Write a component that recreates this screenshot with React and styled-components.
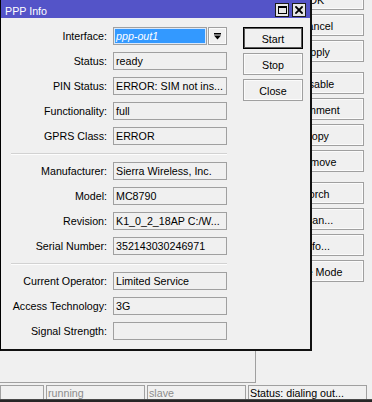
import React from 'react';
import styled, { createGlobalStyle } from 'styled-components';

const Global = createGlobalStyle`
  html, body { margin: 0; padding: 0; background: #f0f0f0; }
  body {
    font-family: "Liberation Sans", Arial, sans-serif;
    font-size: 10.7px;
    color: #000;
  }
  * { box-sizing: border-box; }
`;

const Desktop = styled.div`
  position: relative;
  width: 372px;
  height: 402px;
  overflow: hidden;
  background: #f0f0f0;
  display: flex;
  flex-direction: column;
`;

const MainArea = styled.div`
  flex: 1;
  display: flex;
  min-height: 0;
`;

const ListPanel = styled.div`
  width: 256px;
  border-right: 1px solid #a0a0a0;
  border-bottom: 1px solid #a0a0a0;
`;

const SideButtons = styled.div`
  width: 95px;
  margin-left: 13px;
  margin-top: -12px;
  display: flex;
  flex-direction: column;
  gap: 10px;
`;

const ButtonGroup = styled.div`
  display: flex;
  flex-direction: column;
  gap: 4px;
`;

const WinButton = styled.div`
  height: 22px;
  border: 1px solid ${p => (p.$default ? '#000' : '#a0a0a0')};
  box-shadow: inset 0 0 0 1px ${p => (p.$default ? '#5a5a5a' : '#fbfbfb')};
  background: #f0f0f0;
  display: flex;
  align-items: center;
  justify-content: center;
  white-space: nowrap;
  line-height: 14px;
  padding-top: 1px;
`;

const StatusBar = styled.div`
  height: 14px;
  margin-top: 2px;
  display: flex;
  gap: 2px;
`;

const StatusField = styled.div`
  width: ${p => p.$w}px;
  border: 1px solid #a0a0a0;
  border-bottom: none;
  padding: 1px 0 0 1px;
  line-height: 13px;
  color: ${p => (p.$dim ? '#8c8c8c' : '#000')};
  overflow: hidden;
  white-space: nowrap;
`;

const Taskbar = styled.div`
  height: 3px;
  background: #262626;
  border-top: 1px solid #4a4a4a;
`;

const Dialog = styled.div`
  position: absolute;
  left: 0;
  top: 0;
  width: 312px;
  height: 351px;
  z-index: 2;
  background: #f0f0f0;
  border-left: 1px solid #000;
  border-right: 2px solid #111;
  border-bottom: 2px solid #111;
  display: flex;
  flex-direction: column;
`;

const TitleBar = styled.div`
  height: 18px;
  flex: none;
  background: #5454c8;
  display: flex;
  align-items: flex-start;
  padding: 3px 4px 0 4px;
  gap: 3px;
`;

const TitleText = styled.div`
  flex: 1;
  color: #fff;
  line-height: 14px;
  padding-top: 1px;
  white-space: nowrap;
`;

const TitleButton = styled.div`
  width: 14px;
  height: 14px;
  border: 1px solid #1a1a1a;
  background: #e6e6e6;
  display: flex;
  align-items: center;
  justify-content: center;
`;

const Body = styled.div`
  flex: 1;
  display: flex;
  align-items: flex-start;
  padding: 9px 7px 9px 0;
`;

const FieldGrid = styled.div`
  display: grid;
  grid-template-columns: 106px 114px;
  column-gap: 6px;
  row-gap: 7px;
`;

const Label = styled.div`
  height: 18px;
  line-height: 19px;
  text-align: right;
  white-space: nowrap;
`;

const ValueBox = styled.div`
  height: 18px;
  border: 1px solid #a0a0a0;
  padding: 0 2px;
  line-height: 17px;
  overflow: hidden;
  white-space: nowrap;
`;

const ComboRow = styled.div`
  display: flex;
  gap: 1px;
  height: 18px;
`;

const ComboField = styled.div`
  width: 94px;
  border: 1px solid #a0a0a0;
  box-shadow: inset 0 0 0 1px #d9e8fb;
  background: #3399ff;
  color: #fff;
  font-style: italic;
  padding: 0 2px;
  line-height: 17px;
  white-space: nowrap;
  overflow: hidden;
`;

const DropButton = styled.div`
  flex: 1;
  border: 1px solid #a0a0a0;
  box-shadow: inset 0 0 0 1px #fbfbfb;
  background: #f0f0f0;
  display: flex;
  align-items: center;
  justify-content: center;
`;

const Separator = styled.div`
  grid-column: 1 / -1;
  margin: 1px 0 0 10px;
  height: 2px;
  border-top: 1px solid #d2d2d2;
  border-bottom: 1px solid #fdfdfd;
`;

const ActionColumn = styled.div`
  width: 60px;
  margin-left: 16px;
  display: flex;
  flex-direction: column;
  gap: 4px;
`;

const MaxIcon = () => (
  <svg width="9" height="8" viewBox="0 0 9 8">
    <rect x="0.5" y="0.5" width="8" height="7" fill="none" stroke="#000" strokeWidth="1" />
    <rect x="0" y="0" width="9" height="2" fill="#000" />
  </svg>
);

const CloseIcon = () => (
  <svg width="8" height="8" viewBox="0 0 8 8">
    <path d="M1 1 L7 7 M7 1 L1 7" stroke="#000" strokeWidth="1.8" strokeLinecap="square" />
  </svg>
);

const DropIcon = () => (
  <svg width="7" height="7" viewBox="0 0 7 7">
    <rect x="0" y="0" width="7" height="1.5" fill="#000" />
    <polygon points="0,2.5 7,2.5 3.5,6.5" fill="#000" />
  </svg>
);

const groupA = [
  { label: 'Status:', value: 'ready' },
  { label: 'PIN Status:', value: 'ERROR: SIM not ins...' },
  { label: 'Functionality:', value: 'full' },
  { label: 'GPRS Class:', value: 'ERROR' },
];

const groupB = [
  { label: 'Manufacturer:', value: 'Sierra Wireless, Inc.' },
  { label: 'Model:', value: 'MC8790' },
  { label: 'Revision:', value: 'K1_0_2_18AP C:/W...' },
  { label: 'Serial Number:', value: '352143030246971' },
];

const groupC = [
  { label: 'Current Operator:', value: 'Limited Service' },
  { label: 'Access Technology:', value: '3G' },
  { label: 'Signal Strength:', value: '' },
];

const sideGroups = [
  ['OK', 'Cancel', 'Apply'],
  ['Disable', 'Comment', 'Copy', 'Remove'],
  ['Torch', 'Scan...', 'Info...', 'Safe Mode'],
];

const Rows = ({ items }) =>
  items.map(it => (
    <React.Fragment key={it.label}>
      <Label>{it.label}</Label>
      <ValueBox>{it.value}</ValueBox>
    </React.Fragment>
  ));

export default function App() {
  return (
    <>
      <Global />
      <Desktop>
        <MainArea>
          <ListPanel />
          <SideButtons>
            {sideGroups.map((g, i) => (
              <ButtonGroup key={i}>
                {g.map(b => (
                  <WinButton key={b}>{b}</WinButton>
                ))}
              </ButtonGroup>
            ))}
          </SideButtons>
        </MainArea>
        <StatusBar>
          <StatusField $w={44} />
          <StatusField $w={99} $dim>running</StatusField>
          <StatusField $w={99} $dim>slave</StatusField>
          <StatusField $w={119}>Status: dialing out...</StatusField>
        </StatusBar>
        <Taskbar />

        <Dialog>
          <TitleBar>
            <TitleText>PPP Info</TitleText>
            <TitleButton><MaxIcon /></TitleButton>
            <TitleButton><CloseIcon /></TitleButton>
          </TitleBar>
          <Body>
            <FieldGrid>
              <Label>Interface:</Label>
              <ComboRow>
                <ComboField>ppp-out1</ComboField>
                <DropButton><DropIcon /></DropButton>
              </ComboRow>
              <Rows items={groupA} />
              <Separator />
              <Rows items={groupB} />
              <Separator />
              <Rows items={groupC} />
            </FieldGrid>
            <ActionColumn>
              <WinButton $default>Start</WinButton>
              <WinButton>Stop</WinButton>
              <WinButton>Close</WinButton>
            </ActionColumn>
          </Body>
        </Dialog>
      </Desktop>
    </>
  );
}
